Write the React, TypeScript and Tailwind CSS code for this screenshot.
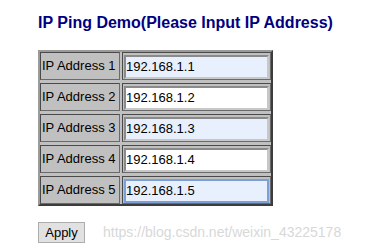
import React from 'react';

const rows = [
    { label: 'IP Address 1', value: '192.168.1.1', filled: true },
    { label: 'IP Address 2', value: '192.168.1.2', filled: false },
    { label: 'IP Address 3', value: '192.168.1.3', filled: true },
    { label: 'IP Address 4', value: '192.168.1.4', filled: false },
    { label: 'IP Address 5', value: '192.168.1.5', filled: true, focused: true },
];

export default function App() {
    return (
        <div className="w-[384px] h-[248px] bg-white pl-[38px] pt-[13px] font-['Liberation_Sans',Arial,sans-serif] overflow-hidden">
            <h3 className="text-[16px] leading-[19px] font-bold text-[#000080]">
                IP Ping Demo(Please Input IP Address)
            </h3>

            {/* Address table */}
            <div className="mt-[18px] w-[235px] flex flex-col gap-[3px] bg-[#c0c0c0] border-2 border-t-[#9a9a9a] border-l-[#9a9a9a] border-b-[#3c3c3c] border-r-[#3c3c3c]">
                {rows.map((row) => (
                    <div key={row.label} className="flex gap-[2px] h-[28px]">
                        <div className="w-[80px] flex items-center pl-[1px] border border-[#4a4a4a] border-b-[#6a6a6a] border-r-[#6a6a6a] text-[13px] text-black whitespace-nowrap">
                            {row.label}
                        </div>
                        <div className="w-[149px] p-[1px] border border-[#4a4a4a] border-b-[#6a6a6a] border-r-[#6a6a6a]">
                            <input
                                type="text"
                                defaultValue={row.value}
                                className={
                                    'w-full h-full px-0 text-[13px] text-black outline-none border-2 ' +
                                    (row.focused
                                        ? 'border-[#7b9fd6] bg-[#e8f0fe]'
                                        : row.filled
                                            ? 'border-t-[#8a8a8a] border-l-[#8a8a8a] border-b-[#c8c8c8] border-r-[#c8c8c8] bg-[#e8f0fe]'
                                            : 'border-t-[#8a8a8a] border-l-[#8a8a8a] border-b-[#c8c8c8] border-r-[#c8c8c8] bg-white')
                                }
                            />
                        </div>
                    </div>
                ))}
            </div>

            <div className="mt-[16px] flex items-center gap-[18px]">
                <button className="w-[47px] h-[21px] bg-[#e1e1e1] border border-[#adadad] text-[13px] text-black leading-none">
                    Apply
                </button>
                <span className="text-[14px] text-[#d8d8d8] whitespace-nowrap">
                    https://blog.csdn.net/weixin_43225178
                </span>
            </div>
        </div>
    );
}
